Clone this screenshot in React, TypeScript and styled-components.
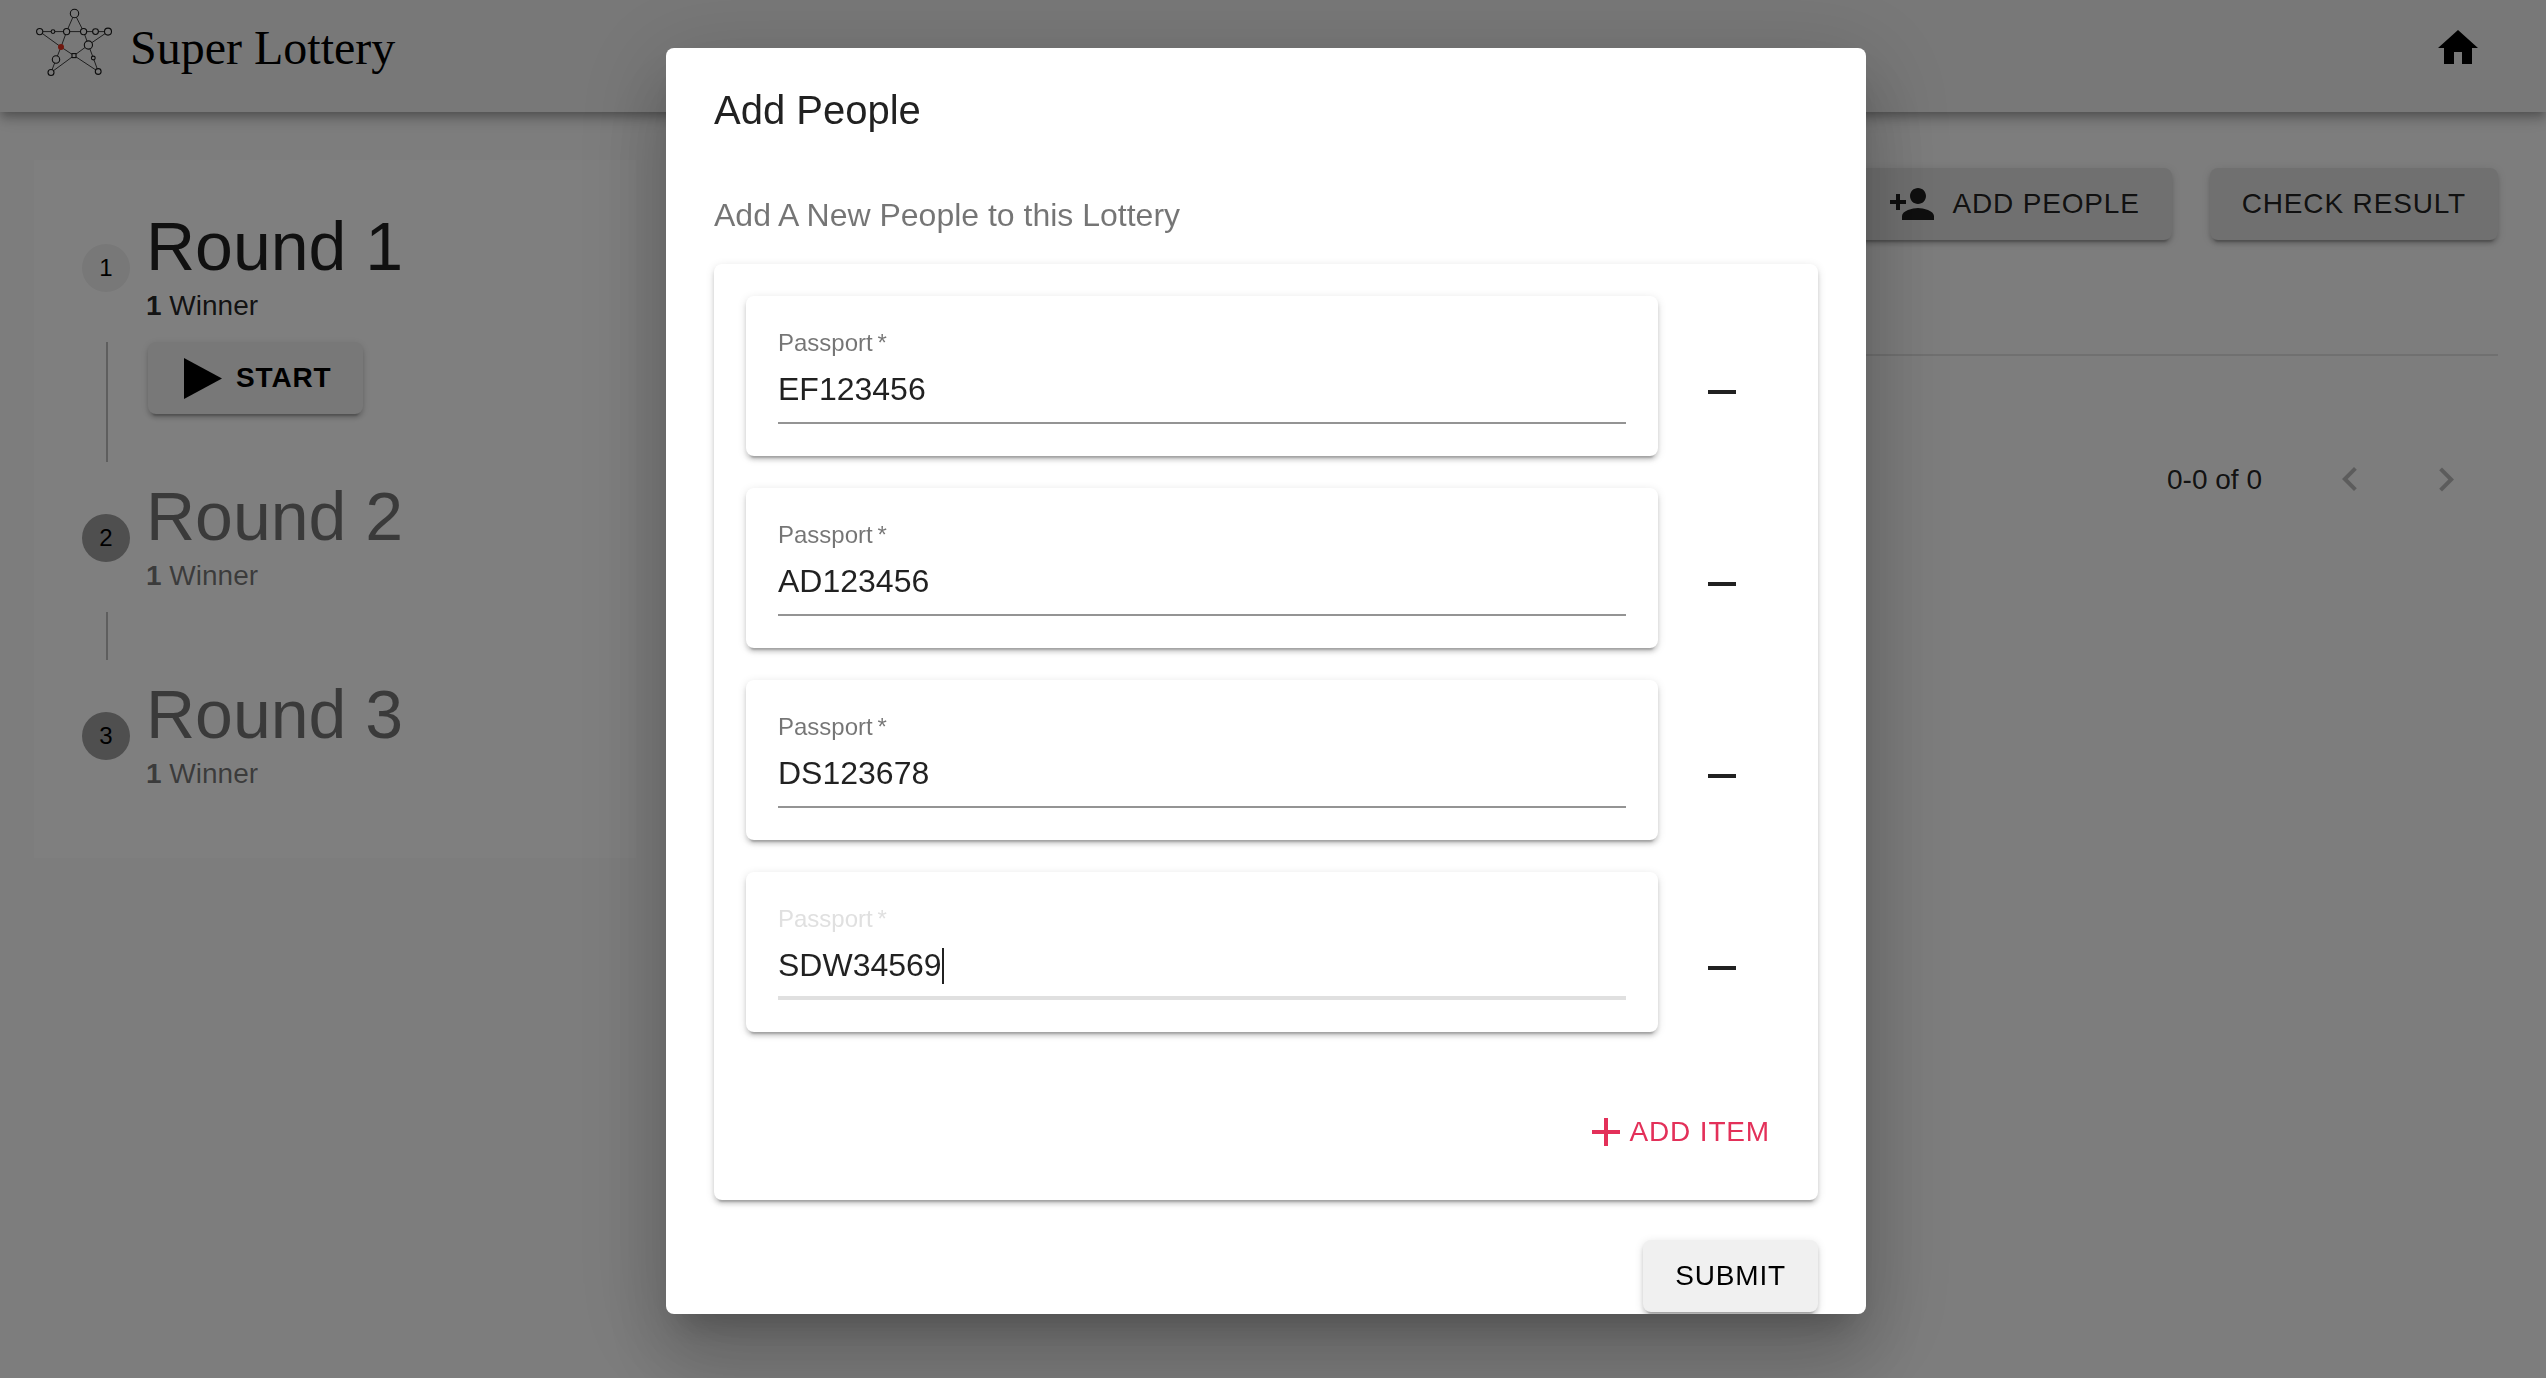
import React, { useState } from "react";
import styled, { createGlobalStyle, css } from "styled-components";

const sans = `"Liberation Sans", Helvetica, Arial, sans-serif`;
const raised = `0 6px 2px -4px rgba(0,0,0,.2), 0 4px 4px 0 rgba(0,0,0,.14), 0 2px 10px 0 rgba(0,0,0,.12)`;

const GlobalStyle = createGlobalStyle`
  * { box-sizing: border-box; }
  body { margin: 0; background: #fafafa; color: rgba(0,0,0,.87); font-family: ${sans}; font-size: 28px; line-height: 40px; }
  h1, h2, h3, p, ol { margin: 0; padding: 0; font-weight: 400; list-style: none; }
  button, input { font: inherit; color: inherit; margin: 0; }
`;

const Page = styled.div`
  min-height: 100vh;
`;

const Header = styled.header`
  display: flex;
  align-items: center;
  justify-content: space-between;
  padding: 0 40px 16px 34px;
  background: #f0f0f0;
  position: relative;
  box-shadow: 0 4px 8px -2px rgba(0,0,0,.2), 0 8px 10px 0 rgba(0,0,0,.14), 0 2px 20px 0 rgba(0,0,0,.12);
`;

const Brand = styled.a`
  display: flex;
  align-items: center;
  gap: 16px;
  color: #000;
  text-decoration: none;
  font-family: "Liberation Serif", "Times New Roman", serif;
  font-size: 48px;
  line-height: 56px;
`;

const LogoSvg = styled.svg`
  width: 80px;
  height: 80px;
  margin-bottom: 16px;
`;

const IconButton = styled.button`
  display: flex;
  padding: 24px;
  border: 0;
  border-radius: 50%;
  background: none;
  color: inherit;
  cursor: pointer;
  &:disabled { color: rgba(0,0,0,.26); cursor: default; }
`;

const HomeButton = styled(IconButton)`
  color: #000;
`;

const IconSvg = styled.svg`
  display: block;
  width: 48px;
  height: 48px;
  fill: currentColor;
`;

const Icon = ({ d }: { d: string }) => (
  <IconSvg viewBox="0 0 24 24" aria-hidden="true">
    <path d={d} />
  </IconSvg>
);

const Main = styled.main`
  display: grid;
  grid-template-columns: minmax(0, 1fr) minmax(0, 3fr);
  align-items: start;
  gap: 56px;
  padding: 48px 48px 48px 34px;
`;

const Button = styled.button<{ $tone?: "grey" | "light" | "accent"; $bold?: boolean }>`
  display: flex;
  align-items: center;
  gap: 16px;
  padding: 12px 32px;
  border: 0;
  border-radius: 8px;
  background: #e0e0e0;
  box-shadow: ${raised};
  line-height: 48px;
  letter-spacing: 0.03em;
  text-transform: uppercase;
  white-space: nowrap;
  cursor: pointer;
  font-weight: ${(p) => (p.$bold ? 700 : 400)};
  ${(p) => p.$tone === "light" && css`background: #f0f0f0; color: #000; gap: 0;`}
  ${(p) => p.$tone === "accent" && css`background: none; box-shadow: none; color: #e33059; gap: 0; padding: 12px 16px;`}
`;

const Stepper = styled.ol`
  && { padding: 48px 48px 62px; }
  background: #fff;
`;

const StepLabel = styled.div<{ $active?: boolean }>`
  display: flex;
  align-items: center;
  gap: 16px;
  color: ${(p) => (p.$active ? "rgba(0,0,0,.87)" : "rgba(0,0,0,.54)")};
`;

const StepBadge = styled.span<{ $active?: boolean }>`
  width: 48px;
  height: 48px;
  border-radius: 50%;
  background: ${(p) => (p.$active ? "#f0f0f0" : "#9e9e9e")};
  color: #000;
  font-size: 24px;
  line-height: 48px;
  text-align: center;
`;

const StepTitle = styled.h2`
  font-size: 68px;
  line-height: 76px;
`;

const StepNote = styled.p`
  line-height: 44px;
`;

const StepContent = styled.div`
  margin: 14px 0 16px 24px;
  padding: 0 0 48px 40px;
  border-left: 2px solid #bdbdbd;
  display: flex;
`;

const PlaySvg = styled.svg`
  width: 56px;
  height: 48px;
`;

const Actions = styled.div`
  display: flex;
  justify-content: flex-end;
  gap: 38px;
  padding-top: 8px;
`;

const TableHead = styled.div`
  height: 116px;
  border-bottom: 2px solid #e0e0e0;
`;

const Pagination = styled.div`
  display: flex;
  align-items: center;
  justify-content: flex-end;
  padding: 76px 4px 8px 0;
`;

const PageCount = styled.span`
  margin-right: 40px;
`;

const Backdrop = styled.div`
  position: fixed;
  inset: 0;
  display: flex;
  align-items: flex-start;
  justify-content: center;
  padding: 48px 64px 64px 50px;
  background: rgba(0,0,0,.5);
`;

const Dialog = styled.section`
  width: 100%;
  max-width: 1200px;
  max-height: 100%;
  display: flex;
  flex-direction: column;
  overflow: hidden;
  border-radius: 8px;
  background: #fff;
  box-shadow: 0 22px 30px -14px rgba(0,0,0,.2), 0 48px 76px 6px rgba(0,0,0,.14), 0 18px 92px 16px rgba(0,0,0,.12);
`;

const DialogTitle = styled.h1`
  && { padding: 32px 48px 36px; }
  font-size: 40px;
  line-height: 60px;
`;

const DialogBody = styled.form`
  flex: 1 1 auto;
  overflow-y: auto;
  scrollbar-width: none;
  padding: 16px 48px;
`;

const DialogText = styled.p`
  && { margin-bottom: 26px; }
  font-size: 32px;
  line-height: 46px;
  color: rgba(0,0,0,.54);
`;

const Paper = styled.div`
  padding: 32px;
  border-radius: 8px;
  background: #fff;
  box-shadow: ${raised};
`;

const Items = styled.div`
  display: grid;
  gap: 32px;
`;

const ItemRow = styled.div`
  display: grid;
  grid-template-columns: minmax(0, 1fr) 96px;
  align-items: end;
  gap: 16px;
  padding-right: 16px;
`;

const RemoveButton = styled(IconButton)`
  margin-bottom: 16px;
`;

const Field = styled.div`
  position: relative;
`;

const Label = styled.label<{ $focused?: boolean }>`
  display: block;
  padding: 3px 0 5px;
  font-size: 24px;
  line-height: 24px;
  color: ${(p) => (p.$focused ? "#e0e0e0" : "rgba(0,0,0,.54)")};
`;

const Input = styled.input<{ $focused?: boolean }>`
  display: block;
  width: 100%;
  height: 64px;
  padding: 10px 0 ${(p) => (p.$focused ? 12 : 14)}px;
  border: 0;
  border-bottom: ${(p) => (p.$focused ? "4px solid #e0e0e0" : "2px solid rgba(0,0,0,.42)")};
  outline: 0;
  background: none;
  font-size: 32px;
  line-height: 38px;
  caret-color: transparent;
`;

const Caret = styled.span`
  position: absolute;
  left: 164px;
  bottom: 16px;
  width: 2px;
  height: 36px;
  background: #212121;
`;

const RowEnd = styled.div<{ $top: number }>`
  display: flex;
  justify-content: flex-end;
  margin-top: ${(p) => p.$top}px;
`;

const nodes: [number, number, number][] = [
  [40.5, 10.5, 4.2], [5.7, 28.6, 3.1], [19, 28.6, 1.9], [32.6, 28.6, 3.1], [49.6, 28.6, 3.1],
  [61.5, 28.6, 2.9], [74, 28.6, 3.5], [54.4, 42, 4.1], [22, 56.5, 3.7], [17, 69.5, 3],
  [59.3, 55, 1.9], [64.2, 68.5, 2.9],
];

const Logo = () => (
  <LogoSvg viewBox="0 -3 80 80" aria-hidden="true">
    <path
      fill="none"
      stroke="#2a2a2a"
      strokeWidth="0.9"
      d="M5.7 28.6H74M5.7 28.6L27 44L40 52.6L64.2 68.5M74 28.6L54.4 42L40 52.6L17 69.5M17 69.5L22 56.5L27 44L32.6 28.6L40.5 10.5L49.6 28.6L54.4 42L59.3 55L64.2 68.5"
    />
    <g fill="#f0f0f0" stroke="#1a1a1a" strokeWidth="1.1">
      {nodes.map(([x, y, r]) => <circle key={`${x}-${y}`} cx={x} cy={y} r={r} />)}
      <rect x="38" y="50.6" width="4" height="4" />
    </g>
    <circle cx="27" cy="44" r="3" fill="#e0301e" />
  </LogoSvg>
);

export default function App() {
  const [items, setItems] = useState(["EF123456", "AD123456", "DS123678", "SDW34569"]);
  const focused = 3;

  return (
    <>
      <GlobalStyle />
      <Page>
        <Header>
          <Brand href="#">
            <Logo />
            Super Lottery
          </Brand>
          <HomeButton aria-label="Home">
            <Icon d="M10 20v-6h4v6h5v-8h3L12 3 2 12h3v8z" />
          </HomeButton>
        </Header>
        <Main>
          <Stepper>
            {[1, 2, 3].map((n) => (
              <li key={n}>
                <StepLabel $active={n === 1}>
                  <StepBadge $active={n === 1}>{n}</StepBadge>
                  <div>
                    <StepTitle>Round {n}</StepTitle>
                    <StepNote><b>1</b> Winner</StepNote>
                  </div>
                </StepLabel>
                {n < 3 && (
                  <StepContent>
                    {n === 1 && (
                      <Button $tone="light" $bold>
                        <PlaySvg viewBox="0 0 56 48" aria-hidden="true">
                          <path d="M4 4L42 24.5L4 45z" />
                        </PlaySvg>
                        Start
                      </Button>
                    )}
                  </StepContent>
                )}
              </li>
            ))}
          </Stepper>
          <section>
            <Actions>
              <Button>
                <Icon d="M15 12c2.21 0 4-1.79 4-4s-1.79-4-4-4-4 1.79-4 4 1.79 4 4 4zm-9-2V7H4v3H1v2h3v3h2v-3h3v-2H6zm9 4c-2.67 0-8 1.34-8 4v2h16v-2c0-2.66-5.33-4-8-4z" />
                Add People
              </Button>
              <Button>Check Result</Button>
            </Actions>
            <TableHead />
            <Pagination>
              <PageCount>0-0 of 0</PageCount>
              <IconButton disabled aria-label="Previous page">
                <Icon d="M15.41 16.09l-4.58-4.59 4.58-4.59L14 5.5l-6 6 6 6z" />
              </IconButton>
              <IconButton disabled aria-label="Next page">
                <Icon d="M8.59 16.34l4.58-4.59-4.58-4.59L10 5.75l6 6-6 6z" />
              </IconButton>
            </Pagination>
          </section>
        </Main>
      </Page>
      <Backdrop>
        <Dialog role="dialog" aria-modal="true" aria-labelledby="dialog-title">
          <DialogTitle id="dialog-title">Add People</DialogTitle>
          <DialogBody onSubmit={(e) => e.preventDefault()}>
            <DialogText>Add A New People to this Lottery</DialogText>
            <Paper>
              <Items>
                {items.map((value, i) => (
                  <ItemRow key={i}>
                    <Paper>
                      <Field>
                        <Label htmlFor={`passport-${i}`} $focused={i === focused}>Passport{"\u2009"}*</Label>
                        <Input
                          id={`passport-${i}`}
                          required
                          value={value}
                          $focused={i === focused}
                          onChange={(e) => setItems(items.map((v, k) => (k === i ? e.target.value : v)))}
                        />
                        {i === focused && <Caret />}
                      </Field>
                    </Paper>
                    <RemoveButton
                      type="button"
                      aria-label="Remove item"
                      onClick={() => setItems(items.filter((_, k) => k !== i))}
                    >
                      <Icon d="M19 13H5v-2h14v2z" />
                    </RemoveButton>
                  </ItemRow>
                ))}
              </Items>
              <RowEnd $top={64}>
                <Button type="button" $tone="accent" onClick={() => setItems([...items, ""])}>
                  <Icon d="M19 13h-6v6h-2v-6H5v-2h6V5h2v6h6v2z" />
                  Add Item
                </Button>
              </RowEnd>
            </Paper>
            <RowEnd $top={40}>
              <Button type="submit" $tone="light">Submit</Button>
            </RowEnd>
          </DialogBody>
        </Dialog>
      </Backdrop>
    </>
  );
}
